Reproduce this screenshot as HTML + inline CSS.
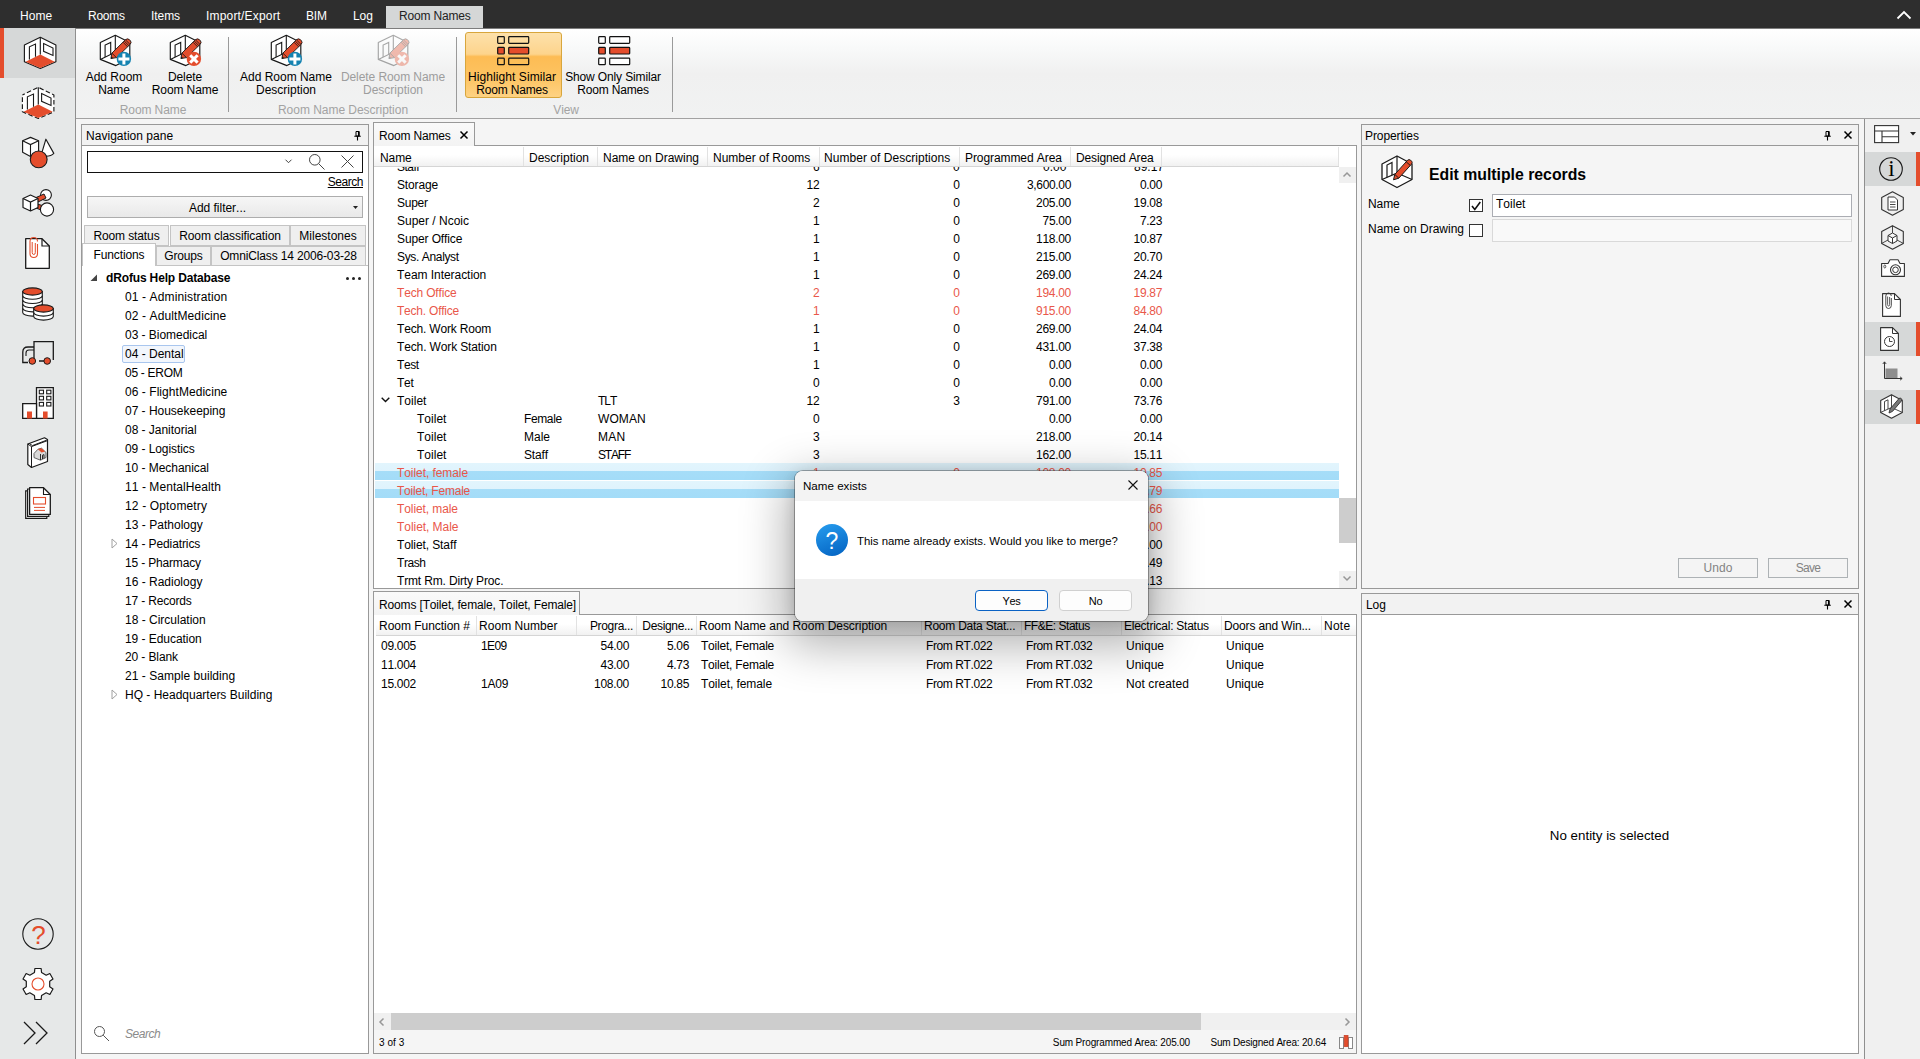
<!DOCTYPE html>
<html lang="en"><head><meta charset="utf-8"><title>dRofus - Room Names</title>
<style>
html,body{margin:0;padding:0}
body{width:1920px;height:1059px;overflow:hidden;position:relative;background:#f5f5f5;font-family:"Liberation Sans",sans-serif;font-size:12px;color:#000}
.a{position:absolute;box-sizing:border-box}
.t{position:absolute;white-space:nowrap;line-height:16px;height:16px;font-kerning:none}
.w{color:#fff}
.g{color:#9b9b9b}
.r{color:#e8503a}
svg{position:absolute;overflow:visible}
</style></head>
<body>
<div class="a" style="left:0px;top:0px;width:1920px;height:28px;background:#2e2e2e"></div>
<div class="a" style="left:386px;top:6px;width:97px;height:23px;background:#d5d7d7"></div>
<span class="t" style="left:20px;top:8.0px;letter-spacing:0.04px;color:#fff">Home</span>
<span class="t" style="left:88px;top:8.0px;letter-spacing:-0.27px;color:#fff">Rooms</span>
<span class="t" style="left:151px;top:8.0px;letter-spacing:-0.07px;color:#fff">Items</span>
<span class="t" style="left:206px;top:8.0px;letter-spacing:0.18px;color:#fff">Import/Export</span>
<span class="t" style="left:306px;top:8.0px;letter-spacing:-0.16px;color:#fff">BIM</span>
<span class="t" style="left:353px;top:8.0px;letter-spacing:-0.09px;color:#fff">Log</span>
<span class="t" style="left:399px;top:8.0px;letter-spacing:-0.17px;color:#222">Room Names</span>
<svg style="left:1896px;top:10px" width="16" height="10" viewBox="0 0 16 10"><path d="M1.5 8.5 L8 2 L14.5 8.5" fill="none" stroke="#fff" stroke-width="1.8"/></svg>
<div class="a" style="left:76px;top:28px;width:1844px;height:91px;background:linear-gradient(#ffffff 0%,#f8f9f9 22%,#f0f0f0 50%,#f1f2f2 100%);border-top:1px solid #7d7d7d;border-bottom:1px solid #a2a2a2"></div>
<div class="a" style="left:228px;top:37px;width:1px;height:75px;background:#9a9a9a"></div>
<div class="a" style="left:456px;top:37px;width:1px;height:75px;background:#9a9a9a"></div>
<div class="a" style="left:672px;top:37px;width:1px;height:75px;background:#9a9a9a"></div>
<div class="a" style="left:465px;top:32px;width:97px;height:66px;border:1px solid #d8a63c;border-radius:3px;background:linear-gradient(#fde1ab 0%,#fdd48c 33%,#fdbc54 37%,#fdc462 70%,#fed283 100%)"></div>
<span class="t" style="left:-36px;width:300px;text-align:center;top:69.0px;color:#000">Add Room</span>
<span class="t" style="left:-36px;width:300px;text-align:center;top:82.0px;letter-spacing:-0.08px;color:#000">Name</span>
<span class="t" style="left:35px;width:300px;text-align:center;top:69.0px;letter-spacing:-0.08px;color:#000">Delete</span>
<span class="t" style="left:35px;width:300px;text-align:center;top:82.0px;letter-spacing:-0.09px;color:#000">Room Name</span>
<span class="t" style="left:136px;width:300px;text-align:center;top:69.0px;letter-spacing:-0.02px;color:#000">Add Room Name</span>
<span class="t" style="left:136px;width:300px;text-align:center;top:82.0px;color:#000">Description</span>
<span class="t" style="left:243px;width:300px;text-align:center;top:69.0px;letter-spacing:-0.08px;color:#9d9d9d">Delete Room Name</span>
<span class="t" style="left:243px;width:300px;text-align:center;top:82.0px;color:#9d9d9d">Description</span>
<span class="t" style="left:362px;width:300px;text-align:center;top:69.0px;letter-spacing:0.08px;color:#000">Highlight Similar</span>
<span class="t" style="left:362px;width:300px;text-align:center;top:82.0px;letter-spacing:-0.17px;color:#000">Room Names</span>
<span class="t" style="left:463px;width:300px;text-align:center;top:69.0px;letter-spacing:-0.14px;color:#000">Show Only Similar</span>
<span class="t" style="left:463px;width:300px;text-align:center;top:82.0px;letter-spacing:-0.17px;color:#000">Room Names</span>
<span class="t" style="left:3px;width:300px;text-align:center;top:102.0px;letter-spacing:-0.09px;color:#a3a3a3">Room Name</span>
<span class="t" style="left:193px;width:300px;text-align:center;top:102.0px;letter-spacing:-0.03px;color:#a3a3a3">Room Name Description</span>
<span class="t" style="left:416px;width:300px;text-align:center;top:102.0px;letter-spacing:-0.18px;color:#a3a3a3">View</span>
<svg style="left:99px;top:35px;" width="36.0" height="34.0" viewBox="0 0 36 34"><path d="M1.3 7.6 L16.3 0.3 L30.8 7.6 L30.8 23.4 L16.9 30.6 L1.3 24.4 Z" fill="#fff" stroke="#161616" stroke-width="1.15" stroke-linejoin="round"/><path d="M16.3 0.3 L16.3 17.2 L1.3 24.4 M16.3 17.2 L30.8 23.4" fill="none" stroke="#161616" stroke-width="1.1"/><path d="M6.1 22 L6.1 10 L11.7 7.4 L11.7 19.3" fill="none" stroke="#161616" stroke-width="1.1"/><path d="M11.9 23.6 L12.9 18.1 L26.6 4.6 Q28.6 3 30.6 4.8 L31.2 5.4 Q33 7.4 31.2 9.3 L17.5 22.6 Z" fill="#e44d2c" stroke="#161616" stroke-width="0.9" stroke-linejoin="round"/><path d="M12.9 18.1 L17.5 22.6 M25.2 6 L29.8 10.6 M26.4 4.8 L31 9.4 M24 7.2 L28.6 11.8" fill="none" stroke="#161616" stroke-width="0.8"/><path d="M11.9 23.6 L12.3 21.4 L14.1 23.1 Z" fill="#161616"/><circle cx="24.9" cy="23.9" r="7.2" fill="#1583b1"/><path d="M24.9 18.4 V29.4 M19.4 23.9 H30.4" stroke="#fff" stroke-width="3"/></svg>
<svg style="left:169px;top:35px;" width="36.0" height="34.0" viewBox="0 0 36 34"><path d="M1.3 7.6 L16.3 0.3 L30.8 7.6 L30.8 23.4 L16.9 30.6 L1.3 24.4 Z" fill="#fff" stroke="#161616" stroke-width="1.15" stroke-linejoin="round"/><path d="M16.3 0.3 L16.3 17.2 L1.3 24.4 M16.3 17.2 L30.8 23.4" fill="none" stroke="#161616" stroke-width="1.1"/><path d="M6.1 22 L6.1 10 L11.7 7.4 L11.7 19.3" fill="none" stroke="#161616" stroke-width="1.1"/><path d="M11.9 23.6 L12.9 18.1 L26.6 4.6 Q28.6 3 30.6 4.8 L31.2 5.4 Q33 7.4 31.2 9.3 L17.5 22.6 Z" fill="#e44d2c" stroke="#161616" stroke-width="0.9" stroke-linejoin="round"/><path d="M12.9 18.1 L17.5 22.6 M25.2 6 L29.8 10.6 M26.4 4.8 L31 9.4 M24 7.2 L28.6 11.8" fill="none" stroke="#161616" stroke-width="0.8"/><path d="M11.9 23.6 L12.3 21.4 L14.1 23.1 Z" fill="#161616"/><circle cx="24.9" cy="23.9" r="7.2" fill="#e44d2c"/><path d="M21.2 20.2 L28.6 27.6 M28.6 20.2 L21.2 27.6" stroke="#fff" stroke-width="3"/></svg>
<svg style="left:270px;top:35px;" width="36.0" height="34.0" viewBox="0 0 36 34"><path d="M1.3 7.6 L16.3 0.3 L30.8 7.6 L30.8 23.4 L16.9 30.6 L1.3 24.4 Z" fill="#fff" stroke="#161616" stroke-width="1.15" stroke-linejoin="round"/><path d="M16.3 0.3 L16.3 17.2 L1.3 24.4 M16.3 17.2 L30.8 23.4" fill="none" stroke="#161616" stroke-width="1.1"/><path d="M6.1 22 L6.1 10 L11.7 7.4 L11.7 19.3" fill="none" stroke="#161616" stroke-width="1.1"/><path d="M11.9 23.6 L12.9 18.1 L26.6 4.6 Q28.6 3 30.6 4.8 L31.2 5.4 Q33 7.4 31.2 9.3 L17.5 22.6 Z" fill="#e44d2c" stroke="#161616" stroke-width="0.9" stroke-linejoin="round"/><path d="M12.9 18.1 L17.5 22.6 M25.2 6 L29.8 10.6 M26.4 4.8 L31 9.4 M24 7.2 L28.6 11.8" fill="none" stroke="#161616" stroke-width="0.8"/><path d="M11.9 23.6 L12.3 21.4 L14.1 23.1 Z" fill="#161616"/><circle cx="24.9" cy="23.9" r="7.2" fill="#1583b1"/><path d="M24.9 18.4 V29.4 M19.4 23.9 H30.4" stroke="#fff" stroke-width="3"/></svg>
<svg style="left:377px;top:35px;opacity:.36;" width="36.0" height="34.0" viewBox="0 0 36 34"><path d="M1.3 7.6 L16.3 0.3 L30.8 7.6 L30.8 23.4 L16.9 30.6 L1.3 24.4 Z" fill="#fff" stroke="#161616" stroke-width="1.15" stroke-linejoin="round"/><path d="M16.3 0.3 L16.3 17.2 L1.3 24.4 M16.3 17.2 L30.8 23.4" fill="none" stroke="#161616" stroke-width="1.1"/><path d="M6.1 22 L6.1 10 L11.7 7.4 L11.7 19.3" fill="none" stroke="#161616" stroke-width="1.1"/><path d="M11.9 23.6 L12.9 18.1 L26.6 4.6 Q28.6 3 30.6 4.8 L31.2 5.4 Q33 7.4 31.2 9.3 L17.5 22.6 Z" fill="#e44d2c" stroke="#161616" stroke-width="0.9" stroke-linejoin="round"/><path d="M12.9 18.1 L17.5 22.6 M25.2 6 L29.8 10.6 M26.4 4.8 L31 9.4 M24 7.2 L28.6 11.8" fill="none" stroke="#161616" stroke-width="0.8"/><path d="M11.9 23.6 L12.3 21.4 L14.1 23.1 Z" fill="#161616"/><circle cx="24.9" cy="23.9" r="7.2" fill="#e44d2c"/><path d="M21.2 20.2 L28.6 27.6 M28.6 20.2 L21.2 27.6" stroke="#fff" stroke-width="3"/></svg>
<svg style="left:497px;top:36px" width="34" height="30" viewBox="0 0 34 30"><rect x="0.7" y="0.7" width="6.6" height="6.6" rx="0.8" fill="none" stroke="#111" stroke-width="1.2"/><rect x="11.7" y="0.7" width="20" height="6.6" rx="0.8" fill="none" stroke="#111" stroke-width="1.2"/><rect x="0.7" y="11.4" width="6.6" height="6.6" rx="0.8" fill="#e44d2c" stroke="#111" stroke-width="1.2"/><rect x="11.7" y="11.4" width="20" height="6.6" rx="0.8" fill="#e44d2c" stroke="#111" stroke-width="1.2"/><rect x="0.7" y="22.1" width="6.6" height="6.6" rx="0.8" fill="none" stroke="#111" stroke-width="1.2"/><rect x="11.7" y="22.1" width="20" height="6.6" rx="0.8" fill="none" stroke="#111" stroke-width="1.2"/></svg>
<svg style="left:598px;top:36px" width="34" height="30" viewBox="0 0 34 30"><rect x="0.7" y="0.7" width="6.6" height="6.6" rx="0.8" fill="#fff" stroke="#111" stroke-width="1.2"/><rect x="11.7" y="0.7" width="20" height="6.6" rx="0.8" fill="#fff" stroke="#111" stroke-width="1.2"/><rect x="0.7" y="11.4" width="6.6" height="6.6" rx="0.8" fill="#e44d2c" stroke="#111" stroke-width="1.2"/><rect x="11.7" y="11.4" width="20" height="6.6" rx="0.8" fill="#e44d2c" stroke="#111" stroke-width="1.2"/><rect x="0.7" y="22.1" width="6.6" height="6.6" rx="0.8" fill="#fff" stroke="#111" stroke-width="1.2"/><rect x="11.7" y="22.1" width="20" height="6.6" rx="0.8" fill="#fff" stroke="#111" stroke-width="1.2"/></svg>
<div class="a" style="left:0px;top:28px;width:76px;height:1031px;background:#e6e8e8;border-right:1px solid #8f8f8f"></div>
<div class="a" style="left:0px;top:28px;width:75px;height:50px;background:#d6d8d8"></div>
<div class="a" style="left:0px;top:28px;width:4px;height:50px;background:#e44d2c"></div>
<svg style="left:24px;top:37px" width="33" height="32" viewBox="0 0 33 32"><path d="M0.4 8 L16.3 0.3 L31.9 8 L31.9 24.8 L16.3 31.5 L0.4 24.8 Z" fill="#fff" stroke="#1a1a1a" stroke-width="1.15" stroke-linejoin="round"/><path d="M1.6 24.8 L16.3 17.4 L30.7 24.8 L16.3 30.9 Z" fill="#e44d2c"/><path d="M16.3 0.3 L16.3 17.6" stroke="#1a1a1a" stroke-width="1.15"/><path d="M5.4 22.6 L5.4 9.8 L11.5 7 L11.5 19.8" fill="none" stroke="#1a1a1a" stroke-width="1.1"/><path d="M19.6 6.6 L29 11.1 L29 18.5 L19.6 14.3 Z" fill="none" stroke="#1a1a1a" stroke-width="1.1"/></svg>
<svg style="left:22px;top:87px" width="33" height="32" viewBox="0 0 33 32"><path d="M0.4 8 L16.3 0.3 L31.9 8 L31.9 24.8 L16.3 31.5 L0.4 24.8 Z" fill="#fff" stroke="#1a1a1a" stroke-width="1.15" stroke-linejoin="round" stroke-dasharray="4.6 2.4" stroke-dashoffset="2"/><path d="M1.6 24.8 L16.3 17.4 L30.7 24.8 L16.3 30.9 Z" fill="#e44d2c"/><path d="M16.3 0.3 L16.3 17.6" stroke="#1a1a1a" stroke-width="1.15"/><path d="M5.4 22.6 L5.4 9.8 L11.5 7 L11.5 19.8" fill="none" stroke="#1a1a1a" stroke-width="1.1"/><path d="M19.6 6.6 L29 11.1 L29 18.5 L19.6 14.3 Z" fill="none" stroke="#1a1a1a" stroke-width="1.1"/></svg>
<svg style="left:22px;top:137px" width="33" height="33" viewBox="0 0 33 33"><path d="M0.6 3.8 L8.5 0.4 L16.6 3.8 L16.6 15.2 L8.5 19.4 L0.6 15.2 Z" fill="#fff" stroke="#1a1a1a" stroke-width="1.15" stroke-linejoin="round"/><path d="M0.6 3.8 L8.5 7.6 L16.6 3.8 M8.5 7.6 L8.5 19.4" fill="none" stroke="#1a1a1a" stroke-width="1.1"/><path d="M23.9 2.2 L31.8 16.4 Q28 20.5 19 18.6 Z" fill="#fff" stroke="#1a1a1a" stroke-width="1.15" stroke-linejoin="round"/><circle cx="16.7" cy="22.4" r="8.4" fill="#e44d2c" stroke="#1a1a1a" stroke-width="1.1"/></svg>
<svg style="left:22px;top:189px" width="33" height="28" viewBox="0 0 33 28"><circle cx="24" cy="6" r="5.4" fill="#fff" stroke="#1a1a1a" stroke-width="1.1"/><path d="M13 9 L22 5 L24 9 L15 13.5 Z" fill="#e44d2c" stroke="#1a1a1a" stroke-width="1"/><path d="M12 14 L14 19 L24 23 L25 18 Z" fill="#e44d2c" stroke="#1a1a1a" stroke-width="1"/><circle cx="25" cy="20.5" r="6.6" fill="#fff" stroke="#1a1a1a" stroke-width="1.1"/><path d="M1 9.5 L8.5 6 L16 9.5 L16 18.5 L8.5 22 L1 18.5 Z" fill="#fff" stroke="#1a1a1a" stroke-width="1.2" stroke-linejoin="round"/><path d="M1 9.5 L8.5 13 L16 9.5 M8.5 13 L8.5 22" fill="none" stroke="#1a1a1a" stroke-width="1.2"/></svg>
<svg style="left:25px;top:238px" width="25" height="31" viewBox="0 0 25 31"><path d="M0.7 0.7 L17 0.7 L24.3 8 L24.3 30.3 L0.7 30.3 Z" fill="#fff" stroke="#1a1a1a" stroke-width="1.3" stroke-linejoin="round"/><path d="M17 0.7 L17 8 L24.3 8" fill="none" stroke="#1a1a1a" stroke-width="1.2"/><path d="M12.5 6 L12.5 15.5 Q12.5 19.5 8.8 19.5 Q5 19.5 5 15.5 L5 3.5 Q5 -0.5 8.8 -0.5 Q12.5 -0.5 12.5 3.5" fill="none" stroke="#e44d2c" stroke-width="1.1"/><path d="M7.2 4 L7.2 14.5 Q7.2 16.5 8.8 16.5 Q10.3 16.5 10.3 14.5 L10.3 5" fill="none" stroke="#e44d2c" stroke-width="1"/></svg>
<svg style="left:22px;top:287px" width="33" height="33" viewBox="0 0 33 33"><path d="M0.6999999999999993 4.5 L0.6999999999999993 25.5 A9.8 3.6 0 0 0 20.3 25.5 L20.3 4.5 Z" fill="#fff" stroke="#1a1a1a" stroke-width="1.1"/><path d="M0.6999999999999993 8.7 A9.8 3.6 0 0 0 20.3 8.7" fill="none" stroke="#1a1a1a" stroke-width="1.1"/><path d="M0.6999999999999993 12.9 A9.8 3.6 0 0 0 20.3 12.9" fill="none" stroke="#1a1a1a" stroke-width="1.1"/><path d="M0.6999999999999993 17.1 A9.8 3.6 0 0 0 20.3 17.1" fill="none" stroke="#1a1a1a" stroke-width="1.1"/><path d="M0.6999999999999993 21.3 A9.8 3.6 0 0 0 20.3 21.3" fill="none" stroke="#1a1a1a" stroke-width="1.1"/><ellipse cx="10.5" cy="4.5" rx="9.8" ry="3.6" fill="#e44d2c" stroke="#1a1a1a" stroke-width="1.1"/><path d="M11.7 21.5 L11.7 29.5 A9.8 3.6 0 0 0 31.3 29.5 L31.3 21.5 Z" fill="#fff" stroke="#1a1a1a" stroke-width="1.1"/><path d="M11.7 25.5 A9.8 3.6 0 0 0 31.3 25.5" fill="none" stroke="#1a1a1a" stroke-width="1.1"/><ellipse cx="21.5" cy="21.5" rx="9.8" ry="3.6" fill="#e44d2c" stroke="#1a1a1a" stroke-width="1.1"/></svg>
<svg style="left:22px;top:341px" width="33" height="24" viewBox="0 0 33 24"><path d="M12 19 L12 0.7 L31.3 0.7 L31.3 19" fill="none" stroke="#1a1a1a" stroke-width="1.3" stroke-linejoin="miter"/><path d="M12 6 L6 6 Q0.8 6 0.8 11 L0.8 21.5 L6 21.5 M17 20 L22 20" fill="none" stroke="#1a1a1a" stroke-width="1.3"/><path d="M12 9 L7 9 Q4 9 4 12 L4 15" fill="none" stroke="#1a1a1a" stroke-width="1.1"/><circle cx="10.3" cy="20" r="3.3" fill="#e44d2c" stroke="#1a1a1a" stroke-width="1"/><circle cx="25.2" cy="20" r="3.3" fill="#e44d2c" stroke="#1a1a1a" stroke-width="1"/></svg>
<svg style="left:22px;top:387px" width="33" height="33" viewBox="0 0 33 33"><path d="M14.5 31.3 L14.5 0.7 L31.3 0.7 L31.3 31.3 Z" fill="#fff" stroke="#1a1a1a" stroke-width="1.3"/><path d="M0.7 31.3 L0.7 16.7 L14.5 16.7 L14.5 31.3 Z" fill="#fff" stroke="#1a1a1a" stroke-width="1.3"/><rect x="17.3" y="3.2" width="4.2" height="3.6" fill="#fff" stroke="#1a1a1a" stroke-width="1.1"/><rect x="24.700000000000003" y="3.2" width="4.2" height="3.6" fill="#fff" stroke="#1a1a1a" stroke-width="1.1"/><rect x="17.3" y="9.3" width="4.2" height="3.6" fill="#fff" stroke="#1a1a1a" stroke-width="1.1"/><rect x="24.700000000000003" y="9.3" width="4.2" height="3.6" fill="#fff" stroke="#1a1a1a" stroke-width="1.1"/><rect x="17.3" y="15.399999999999999" width="4.2" height="3.6" fill="#fff" stroke="#1a1a1a" stroke-width="1.1"/><rect x="24.700000000000003" y="15.399999999999999" width="4.2" height="3.6" fill="#fff" stroke="#1a1a1a" stroke-width="1.1"/><rect x="5" y="24.5" width="5" height="7" fill="#e44d2c"/><rect x="21" y="24.5" width="4.6" height="7" fill="#e44d2c"/></svg>
<svg style="left:27px;top:437px" width="21" height="31" viewBox="0 0 21 31"><path d="M0.8 7 L17.5 0.8 L20.5 2.6 L20.5 24.5 L4.5 30.5 L0.8 27.5 Z" fill="#fff" stroke="#1a1a1a" stroke-width="1.2" stroke-linejoin="round"/><path d="M0.8 7 L4.5 9.6 L20.5 3.6 M4.5 9.6 L4.5 30.5 M2.2 6.4 L5.4 8.6 L19.6 3.2" fill="none" stroke="#1a1a1a" stroke-width="1"/><path d="M7 16.5 L11 12.2 L14.5 11.2 L19 15.5 L19 20.5 L13.5 23.2 L7 20.6 Z" fill="#d9d9d9" stroke="#555" stroke-width="0.9"/><path d="M11 12.2 L14.5 11.2 L18 14.6 L14.5 15.6 Z" fill="#e44d2c"/><path d="M13.5 23 L13.5 17 M15.5 22 L15.5 18.2 L17 17.6 L17 21.4" fill="none" stroke="#1a1a1a" stroke-width="0.9"/></svg>
<svg style="left:25px;top:487px" width="26" height="32" viewBox="0 0 26 32"><path d="M4 3.8 L0.7 3.8 L0.7 31.3 L21.8 31.3 L21.8 28" fill="#fff" stroke="#1a1a1a" stroke-width="1.2"/><path d="M5 2 L2.6 2 L2.6 29.4 L23.8 29.4 L23.8 27" fill="#fff" stroke="#1a1a1a" stroke-width="1.2"/><path d="M4.6 0.7 L18.5 0.7 L25.3 7.5 L25.3 27.4 L4.6 27.4 Z" fill="#fff" stroke="#1a1a1a" stroke-width="1.3" stroke-linejoin="round"/><path d="M18.5 0.7 L18.5 7.5 L25.3 7.5" fill="none" stroke="#1a1a1a" stroke-width="1.1"/><rect x="8.5" y="10.5" width="12" height="6.5" fill="none" stroke="#e44d2c" stroke-width="1.1"/><path d="M9 20.4 H20 M9 23.4 H20" stroke="#e44d2c" stroke-width="1"/></svg>
<svg style="left:22px;top:918px" width="32" height="32" viewBox="0 0 32 32"><circle cx="16" cy="16" r="15.2" fill="none" stroke="#1a1a1a" stroke-width="1.1"/></svg>
<span class="t" style="left:-111.5px;width:300px;text-align:center;top:921.0px;line-height:28px;height:28px;color:#e44d2c;font-size:26px">?</span>
<svg style="left:22px;top:968px" width="32" height="32" viewBox="0 0 32 32"><path d="M12.45 4.54 L12.86 0.51 L19.14 0.51 L19.55 4.54 L24.16 7.20 L27.84 5.54 L30.98 10.98 L27.70 13.34 L27.70 18.66 L30.98 21.02 L27.84 26.46 L24.16 24.80 L19.55 27.46 L19.14 31.49 L12.86 31.49 L12.45 27.46 L7.84 24.80 L4.16 26.46 L1.02 21.02 L4.30 18.66 L4.30 13.34 L1.02 10.98 L4.16 5.54 L7.84 7.20 Z" fill="#fff" stroke="#1a1a1a" stroke-width="1.2" stroke-linejoin="round"/><circle cx="16" cy="16" r="6" fill="none" stroke="#e44d2c" stroke-width="1.1"/></svg>
<svg style="left:23px;top:1021px" width="26" height="24" viewBox="0 0 26 24"><path d="M1 1 L12 12 L1 23 M13 1 L24 12 L13 23" fill="none" stroke="#1a1a1a" stroke-width="1.3"/></svg>
<div class="a" style="left:1864px;top:119px;width:56px;height:940px;background:#f0f0f0;border-left:1px solid #8f8f8f"></div>
<div class="a" style="left:1865px;top:152px;width:55px;height:34px;background:#d6d8d8"></div>
<div class="a" style="left:1916px;top:152px;width:4px;height:34px;background:#e44d2c"></div>
<div class="a" style="left:1865px;top:322px;width:55px;height:34px;background:#d6d8d8"></div>
<div class="a" style="left:1916px;top:322px;width:4px;height:34px;background:#e44d2c"></div>
<div class="a" style="left:1865px;top:390px;width:55px;height:34px;background:#d6d8d8"></div>
<div class="a" style="left:1916px;top:390px;width:4px;height:34px;background:#e44d2c"></div>
<svg style="left:1874px;top:125px" width="26" height="19" viewBox="0 0 26 19"><rect x="0.6" y="0.6" width="24" height="17" fill="#fff" stroke="#333" stroke-width="1.1"/><path d="M0.6 6 H24.6 M8 6 V17.6 M8 11.8 H24.6" fill="none" stroke="#333" stroke-width="1.1"/></svg>
<svg style="left:1910px;top:132px" width="6" height="4"><path d="M0 0 H6 L3 3.5 Z" fill="#222"/></svg>
<svg style="left:1879px;top:157px" width="24" height="24" viewBox="0 0 24 24"><circle cx="12" cy="12" r="11.3" fill="none" stroke="#1a1a1a" stroke-width="1.1"/></svg>
<span class="t" style="left:1741.5px;width:300px;text-align:center;top:157.0px;line-height:24px;height:24px;font-family:'Liberation Serif',serif;font-size:23px">i</span>
<svg style="left:1881px;top:191px" width="23" height="25" viewBox="0 0 23 25"><path d="M11.5 0.7 L22.3 6.6 L22.3 18.4 L11.5 24.3 L0.7 18.4 L0.7 6.6 Z" fill="none" stroke="#333" stroke-width="1.1" stroke-linejoin="round"/><path d="M7 6 L13.5 6 L16.5 9 L16.5 19 L7 19 Z" fill="#fff" stroke="#333" stroke-width="1"/><path d="M9 11 H14.5 M9 13.5 H14.5 M9 16 H14.5" stroke="#333" stroke-width="0.9"/></svg>
<svg style="left:1881px;top:225px" width="23" height="25" viewBox="0 0 23 25"><path d="M11.5 0.7 L22.3 6.6 L22.3 18.4 L11.5 24.3 L0.7 18.4 L0.7 6.6 Z" fill="none" stroke="#333" stroke-width="1.1" stroke-linejoin="round"/><path d="M11.5 0.7 V8 M0.7 18.4 L7 15 M22.3 18.4 L16 15" stroke="#333" stroke-width="0.9"/><path d="M7 10.5 L11.5 8 L16 10.5 L16 16 L11.5 18.5 L7 16 Z M7 10.5 L11.5 13 L16 10.5 M11.5 13 V18.5" fill="#fff" stroke="#333" stroke-width="1"/></svg>
<svg style="left:1881px;top:259px" width="24" height="18" viewBox="0 0 24 18"><path d="M0.6 4.5 L7 4.5 L9 0.8 L17 0.8 L19 4.5 L23.4 4.5 L23.4 17.4 L0.6 17.4 Z" fill="#fff" stroke="#333" stroke-width="1.1" stroke-linejoin="round"/><circle cx="14.5" cy="10.8" r="5" fill="none" stroke="#333" stroke-width="1.1"/><circle cx="14.5" cy="10.8" r="2.8" fill="none" stroke="#333" stroke-width="1"/><ellipse cx="3.8" cy="7.5" rx="1" ry="1.5" fill="none" stroke="#333" stroke-width="0.8"/></svg>
<svg style="left:1882px;top:293px" width="19" height="24" viewBox="0 0 19 24"><path d="M0.6 0.6 L12.5 0.6 L18.4 6.5 L18.4 23.4 L0.6 23.4 Z" fill="#fff" stroke="#333" stroke-width="1.1" stroke-linejoin="round"/><path d="M12.5 0.6 V6.5 H18.4" fill="none" stroke="#333" stroke-width="1"/><path d="M9.3 5 V12.5 Q9.3 15.5 6.5 15.5 Q3.8 15.5 3.8 12.5 V3 Q3.8 0 6.5 0 Q9.3 0 9.3 3" fill="none" stroke="#333" stroke-width="0.9"/><path d="M5.6 3.5 V11.5 Q5.6 13 6.6 13 Q7.6 13 7.6 11.5 V4" fill="none" stroke="#333" stroke-width="0.8"/></svg>
<svg style="left:1880px;top:327px" width="19" height="24" viewBox="0 0 19 24"><path d="M0.6 0.6 L12.5 0.6 L18.4 6.5 L18.4 23.4 L0.6 23.4 Z" fill="#fff" stroke="#333" stroke-width="1.1" stroke-linejoin="round"/><path d="M12.5 0.6 V6.5 H18.4" fill="none" stroke="#333" stroke-width="1"/><circle cx="9.5" cy="14.5" r="5" fill="none" stroke="#333" stroke-width="1"/><path d="M9.5 11 V14.5 H12.5" fill="none" stroke="#333" stroke-width="0.9"/></svg>
<svg style="left:1882px;top:361px" width="21" height="20" viewBox="0 0 21 20"><rect x="3.5" y="7.5" width="12" height="9.5" fill="#8e8e8e"/><path d="M2.5 1 V17.5 H20" fill="none" stroke="#333" stroke-width="1"/><path d="M0.8 3 L2.5 0.8 L4.2 3 M18 15.8 L20.2 17.5 L18 19.2" fill="none" stroke="#333" stroke-width="0.9"/></svg>
<svg style="left:1880px;top:394px" width="23" height="25" viewBox="0 0 23 25"><path d="M11.5 0.7 L22.3 6.6 L22.3 18.4 L11.5 24.3 L0.7 18.4 L0.7 6.6 Z" fill="#fff" stroke="#333" stroke-width="1.1" stroke-linejoin="round"/><path d="M11.5 0.7 V13.5 L0.7 18.4 M11.5 13.5 L22.3 18.4" fill="none" stroke="#333" stroke-width="0.9"/><path d="M4.5 16.5 V7.5 L8 5.8 V15" fill="none" stroke="#333" stroke-width="0.9"/><path d="M9 19 L10 15 L19 4.5 Q20.2 3.6 21.3 4.6 Q22.4 5.8 21.4 7 L12.5 17.4 Z" fill="#777" stroke="#333" stroke-width="0.9"/></svg>
<div class="a" style="left:81px;top:124px;width:288px;height:930px;background:#fff;border:1px solid #999"></div>
<div class="a" style="left:82px;top:125px;width:286px;height:20px;background:#f2f2f2"></div>
<div class="a" style="left:82px;top:145px;width:286px;height:1px;background:#999"></div>
<span class="t" style="left:86px;top:127.5px;letter-spacing:0.03px;">Navigation pane</span>
<svg style="left:354px;top:131px" width="7" height="10" viewBox="0 0 7 10"><path d="M2 0.5 H5.2 V5 H2 Z" fill="none" stroke="#000" stroke-width="1"/><path d="M4.6 0.5 V5" stroke="#000" stroke-width="1.3"/><path d="M0.3 5.3 H6.8 M3.5 5.3 V9.6" stroke="#000" stroke-width="1.1"/></svg>
<div class="a" style="left:87px;top:151px;width:276px;height:22px;background:#fff;border:1px solid #111"></div>
<svg style="left:285px;top:159px" width="7" height="5"><path d="M0.5 0.7 L3.5 3.7 L6.5 0.7" fill="none" stroke="#444" stroke-width="1"/></svg>
<svg style="left:308px;top:153px" width="18" height="18" viewBox="0 0 18 18"><circle cx="6.8" cy="6.8" r="5.3" fill="none" stroke="#444" stroke-width="1"/><path d="M10.6 10.6 L16.5 16.5" stroke="#444" stroke-width="1"/></svg>
<svg style="left:341px;top:155px" width="13" height="13" viewBox="0 0 13 13"><path d="M0.5 0.5 L12.5 12.5 M12.5 0.5 L0.5 12.5" stroke="#444" stroke-width="1"/></svg>
<span class="t" style="right:1557px;top:174.0px;letter-spacing:-0.46px;text-decoration:underline">Search</span>
<div class="a" style="left:87px;top:196px;width:276px;height:22px;background:linear-gradient(#f6f6f6,#e9e9e9);border:1px solid #adadad"></div>
<span class="t" style="left:67.5px;width:300px;text-align:center;top:199.5px;letter-spacing:-0.02px;">Add filter...</span>
<svg style="left:353px;top:206px" width="5" height="3"><path d="M0 0 H5 L2.5 3 Z" fill="#222"/></svg>
<div class="a" style="left:84px;top:225px;width:85px;height:21px;background:#efefef;border:1px solid #c4c4c4"></div>
<span class="t" style="left:-23.5px;width:300px;text-align:center;top:228.0px;letter-spacing:-0.12px;">Room status</span>
<div class="a" style="left:170px;top:225px;width:120px;height:21px;background:#efefef;border:1px solid #c4c4c4"></div>
<span class="t" style="left:80.0px;width:300px;text-align:center;top:228.0px;letter-spacing:-0.09px;">Room classification</span>
<div class="a" style="left:290px;top:225px;width:76px;height:21px;background:#efefef;border:1px solid #c4c4c4"></div>
<span class="t" style="left:178.0px;width:300px;text-align:center;top:228.0px;">Milestones</span>
<div class="a" style="left:156px;top:246px;width:55px;height:20px;background:#efefef;border:1px solid #c4c4c4"></div>
<span class="t" style="left:33.5px;width:300px;text-align:center;top:248.0px;letter-spacing:-0.17px;">Groups</span>
<div class="a" style="left:211px;top:246px;width:155px;height:20px;background:#efefef;border:1px solid #c4c4c4"></div>
<span class="t" style="left:138.5px;width:300px;text-align:center;top:248.0px;letter-spacing:-0.15px;">OmniClass 14 2006-03-28</span>
<div class="a" style="left:82px;top:265px;width:286px;height:1px;background:#c4c4c4"></div>
<div class="a" style="left:82px;top:243px;width:74px;height:23px;background:#fff;border:1px solid #c4c4c4;border-bottom:none"></div>
<span class="t" style="left:-31.0px;width:300px;text-align:center;top:246.5px;letter-spacing:-0.13px;">Functions</span>
<svg style="left:90px;top:274px" width="8" height="8"><path d="M7 0.5 V7 H0.5 Z" fill="#444"/></svg>
<span class="t" style="left:106px;top:269.5px;font-weight:bold;letter-spacing:-.15px">dRofus Help Database</span>
<div class="a" style="left:346px;top:277px;width:3px;height:3px;background:#222;border-radius:1.5px"></div>
<div class="a" style="left:352px;top:277px;width:3px;height:3px;background:#222;border-radius:1.5px"></div>
<div class="a" style="left:358px;top:277px;width:3px;height:3px;background:#222;border-radius:1.5px"></div>
<div class="a" style="left:122px;top:345px;width:63px;height:18px;background:#f2f6fc;border:1px solid #a9c6ee;border-radius:2px"></div>
<span class="t" style="left:125px;top:288.5px;letter-spacing:0.12px;">01 - Administration</span>
<span class="t" style="left:125px;top:307.5px;letter-spacing:0.11px;">02 - AdultMedicine</span>
<span class="t" style="left:125px;top:326.5px;letter-spacing:-0.03px;">03 - Biomedical</span>
<span class="t" style="left:125px;top:345.5px;">04 - Dental</span>
<span class="t" style="left:125px;top:364.5px;letter-spacing:-0.29px;">05 - EROM</span>
<span class="t" style="left:125px;top:383.5px;letter-spacing:0.05px;">06 - FlightMedicine</span>
<span class="t" style="left:125px;top:402.5px;letter-spacing:-0.02px;">07 - Housekeeping</span>
<span class="t" style="left:125px;top:421.5px;letter-spacing:-0.03px;">08 - Janitorial</span>
<span class="t" style="left:125px;top:440.5px;letter-spacing:-0.07px;">09 - Logistics</span>
<span class="t" style="left:125px;top:459.5px;letter-spacing:-0.05px;">10 - Mechanical</span>
<span class="t" style="left:125px;top:478.5px;letter-spacing:0.07px;">11 - MentalHealth</span>
<span class="t" style="left:125px;top:497.5px;letter-spacing:0.15px;">12 - Optometry</span>
<span class="t" style="left:125px;top:516.5px;letter-spacing:0.03px;">13 - Pathology</span>
<span class="t" style="left:125px;top:535.5px;letter-spacing:-0.10px;">14 - Pediatrics</span>
<span class="t" style="left:125px;top:554.5px;letter-spacing:-0.17px;">15 - Pharmacy</span>
<span class="t" style="left:125px;top:573.5px;">16 - Radiology</span>
<span class="t" style="left:125px;top:592.5px;letter-spacing:-0.17px;">17 - Records</span>
<span class="t" style="left:125px;top:611.5px;">18 - Circulation</span>
<span class="t" style="left:125px;top:630.5px;letter-spacing:-0.05px;">19 - Education</span>
<span class="t" style="left:125px;top:648.5px;letter-spacing:-0.11px;">20 - Blank</span>
<span class="t" style="left:125px;top:667.5px;letter-spacing:0.04px;">21 - Sample building</span>
<span class="t" style="left:125px;top:686.5px;">HQ - Headquarters Building</span>
<svg style="left:111px;top:538.0px" width="7" height="11"><path d="M1 1 L6 5.5 L1 10 Z" fill="#fff" stroke="#a0a0a0" stroke-width="1"/></svg>
<svg style="left:111px;top:689.0px" width="7" height="11"><path d="M1 1 L6 5.5 L1 10 Z" fill="#fff" stroke="#a0a0a0" stroke-width="1"/></svg>
<svg style="left:93px;top:1025px" width="17" height="17" viewBox="0 0 17 17"><circle cx="6.5" cy="6.5" r="5" fill="none" stroke="#555" stroke-width="1"/><path d="M10.2 10.2 L16 16" stroke="#555" stroke-width="1"/></svg>
<span class="t" style="left:125px;top:1025.5px;font-style:italic;letter-spacing:-0.46px;color:#8a8a8a">Search</span>
<div class="a" style="left:373px;top:145px;width:984px;height:444px;background:#fff;border:1px solid #999"></div>
<div class="a" style="left:373px;top:122px;width:102px;height:24px;background:linear-gradient(#fafafa,#f3f3f3);border:1px solid #999;border-bottom:none"></div>
<span class="t" style="left:379px;top:127.5px;letter-spacing:-0.17px;">Room Names</span>
<svg style="left:460px;top:131px" width="8" height="8" viewBox="0 0 8 8"><path d="M0.5 0.5 L7.5 7.5 M7.5 0.5 L0.5 7.5" stroke="#000" stroke-width="1.5"/></svg>
<div class="a" style="left:374px;top:146px;width:965px;height:21px;background:linear-gradient(#ffffff,#ffffff 45%,#f1f1f1);border-bottom:1px solid #d5d5d5"></div>
<div class="a" style="left:523px;top:147px;width:1px;height:19px;background:#e2e2e2"></div>
<div class="a" style="left:597px;top:147px;width:1px;height:19px;background:#e2e2e2"></div>
<div class="a" style="left:707px;top:147px;width:1px;height:19px;background:#e2e2e2"></div>
<div class="a" style="left:819px;top:147px;width:1px;height:19px;background:#e2e2e2"></div>
<div class="a" style="left:959px;top:147px;width:1px;height:19px;background:#e2e2e2"></div>
<div class="a" style="left:1070px;top:147px;width:1px;height:19px;background:#e2e2e2"></div>
<div class="a" style="left:1161px;top:147px;width:1px;height:19px;background:#e2e2e2"></div>
<div class="a" style="left:1338px;top:147px;width:1px;height:19px;background:#e2e2e2"></div>
<span class="t" style="left:380px;top:149.5px;letter-spacing:-0.08px;">Name</span>
<span class="t" style="left:529px;top:149.5px;">Description</span>
<span class="t" style="left:603px;top:149.5px;">Name on Drawing</span>
<span class="t" style="left:713px;top:149.5px;">Number of Rooms</span>
<span class="t" style="left:824px;top:149.5px;letter-spacing:0.04px;">Number of Descriptions</span>
<span class="t" style="left:965px;top:149.5px;letter-spacing:-0.08px;">Programmed Area</span>
<span class="t" style="left:1076px;top:149.5px;letter-spacing:-0.15px;">Designed Area</span>
<div class="a" style="left:1339px;top:167px;width:17px;height:16px;background:#f0f0f0"></div>
<div class="a" style="left:1339px;top:571px;width:17px;height:17px;background:#f0f0f0"></div>
<div class="a" style="left:1339px;top:498px;width:17px;height:45px;background:#cdcdcd"></div>
<svg style="left:1343px;top:172px" width="8" height="5"><path d="M0.5 4.5 L4 1 L7.5 4.5" fill="none" stroke="#979797" stroke-width="1.5"/></svg>
<svg style="left:1343px;top:576px" width="8" height="5"><path d="M0.5 0.5 L4 4 L7.5 0.5" fill="none" stroke="#979797" stroke-width="1.5"/></svg>
<div class="a" style="left:375px;top:167px;width:964px;height:6px;overflow:hidden">
<span class="t" style="left:22px;top:-8.5px;letter-spacing:-.5px">Staff</span><span class="t" style="left:438px;top:-8.5px">6</span><span class="t" style="left:578px;top:-8.5px">0</span><span class="t" style="left:668px;top:-8.5px">0.00</span><span class="t" style="left:759px;top:-8.5px">89.17</span>
</div>
<div class="a" style="left:375px;top:463px;width:964px;height:17px;background:linear-gradient(#e2f5fd 0%,#dff3fd 49%,#a6ddf8 50%,#a3dcf8 100%)"></div>
<div class="a" style="left:375px;top:481px;width:964px;height:17px;background:linear-gradient(#e2f5fd 0%,#dff3fd 49%,#a6ddf8 50%,#a3dcf8 100%)"></div>
<span class="t" style="left:397px;top:176.5px;letter-spacing:-0.13px;">Storage</span>
<span class="t" style="right:1100.6px;top:176.5px;letter-spacing:-0.21px;">12</span>
<span class="t" style="right:960.3px;top:176.5px;letter-spacing:-0.21px;">0</span>
<span class="t" style="right:849px;top:176.5px;letter-spacing:-0.34px;">3,600.00</span>
<span class="t" style="right:758px;top:176.5px;letter-spacing:-0.34px;">0.00</span>
<span class="t" style="left:397px;top:194.5px;letter-spacing:-0.27px;">Super</span>
<span class="t" style="right:1100.6px;top:194.5px;letter-spacing:-0.21px;">2</span>
<span class="t" style="right:960.3px;top:194.5px;letter-spacing:-0.21px;">0</span>
<span class="t" style="right:849px;top:194.5px;letter-spacing:-0.29px;">205.00</span>
<span class="t" style="right:758px;top:194.5px;letter-spacing:-0.31px;">19.08</span>
<span class="t" style="left:397px;top:212.5px;">Super / Ncoic</span>
<span class="t" style="right:1100.6px;top:212.5px;letter-spacing:-0.21px;">1</span>
<span class="t" style="right:960.3px;top:212.5px;letter-spacing:-0.21px;">0</span>
<span class="t" style="right:849px;top:212.5px;letter-spacing:-0.31px;">75.00</span>
<span class="t" style="right:758px;top:212.5px;letter-spacing:-0.34px;">7.23</span>
<span class="t" style="left:397px;top:230.5px;letter-spacing:-0.12px;">Super Office</span>
<span class="t" style="right:1100.6px;top:230.5px;letter-spacing:-0.21px;">1</span>
<span class="t" style="right:960.3px;top:230.5px;letter-spacing:-0.21px;">0</span>
<span class="t" style="right:849px;top:230.5px;letter-spacing:-0.29px;">118.00</span>
<span class="t" style="right:758px;top:230.5px;letter-spacing:-0.31px;">10.87</span>
<span class="t" style="left:397px;top:248.5px;letter-spacing:-0.36px;">Sys. Analyst</span>
<span class="t" style="right:1100.6px;top:248.5px;letter-spacing:-0.21px;">1</span>
<span class="t" style="right:960.3px;top:248.5px;letter-spacing:-0.21px;">0</span>
<span class="t" style="right:849px;top:248.5px;letter-spacing:-0.29px;">215.00</span>
<span class="t" style="right:758px;top:248.5px;letter-spacing:-0.31px;">20.70</span>
<span class="t" style="left:397px;top:266.5px;letter-spacing:-0.05px;">Team Interaction</span>
<span class="t" style="right:1100.6px;top:266.5px;letter-spacing:-0.21px;">1</span>
<span class="t" style="right:960.3px;top:266.5px;letter-spacing:-0.21px;">0</span>
<span class="t" style="right:849px;top:266.5px;letter-spacing:-0.29px;">269.00</span>
<span class="t" style="right:758px;top:266.5px;letter-spacing:-0.31px;">24.24</span>
<span class="t" style="left:397px;top:284.5px;letter-spacing:-0.17px;color:#e9574a;">Tech Office</span>
<span class="t" style="right:1100.6px;top:284.5px;letter-spacing:-0.21px;color:#e9574a;">2</span>
<span class="t" style="right:960.3px;top:284.5px;letter-spacing:-0.21px;color:#e9574a;">0</span>
<span class="t" style="right:849px;top:284.5px;letter-spacing:-0.29px;color:#e9574a;">194.00</span>
<span class="t" style="right:758px;top:284.5px;letter-spacing:-0.31px;color:#e9574a;">19.87</span>
<span class="t" style="left:397px;top:302.5px;letter-spacing:-0.22px;color:#e9574a;">Tech. Office</span>
<span class="t" style="right:1100.6px;top:302.5px;letter-spacing:-0.21px;color:#e9574a;">1</span>
<span class="t" style="right:960.3px;top:302.5px;letter-spacing:-0.21px;color:#e9574a;">0</span>
<span class="t" style="right:849px;top:302.5px;letter-spacing:-0.29px;color:#e9574a;">915.00</span>
<span class="t" style="right:758px;top:302.5px;letter-spacing:-0.31px;color:#e9574a;">84.80</span>
<span class="t" style="left:397px;top:320.5px;letter-spacing:-0.18px;">Tech. Work Room</span>
<span class="t" style="right:1100.6px;top:320.5px;letter-spacing:-0.21px;">1</span>
<span class="t" style="right:960.3px;top:320.5px;letter-spacing:-0.21px;">0</span>
<span class="t" style="right:849px;top:320.5px;letter-spacing:-0.29px;">269.00</span>
<span class="t" style="right:758px;top:320.5px;letter-spacing:-0.31px;">24.04</span>
<span class="t" style="left:397px;top:338.5px;letter-spacing:-0.13px;">Tech. Work Station</span>
<span class="t" style="right:1100.6px;top:338.5px;letter-spacing:-0.21px;">1</span>
<span class="t" style="right:960.3px;top:338.5px;letter-spacing:-0.21px;">0</span>
<span class="t" style="right:849px;top:338.5px;letter-spacing:-0.29px;">431.00</span>
<span class="t" style="right:758px;top:338.5px;letter-spacing:-0.31px;">37.38</span>
<span class="t" style="left:397px;top:356.5px;letter-spacing:-0.40px;">Test</span>
<span class="t" style="right:1100.6px;top:356.5px;letter-spacing:-0.21px;">1</span>
<span class="t" style="right:960.3px;top:356.5px;letter-spacing:-0.21px;">0</span>
<span class="t" style="right:849px;top:356.5px;letter-spacing:-0.34px;">0.00</span>
<span class="t" style="right:758px;top:356.5px;letter-spacing:-0.34px;">0.00</span>
<span class="t" style="left:397px;top:374.5px;letter-spacing:-0.24px;">Tet</span>
<span class="t" style="right:1100.6px;top:374.5px;letter-spacing:-0.21px;">0</span>
<span class="t" style="right:960.3px;top:374.5px;letter-spacing:-0.21px;">0</span>
<span class="t" style="right:849px;top:374.5px;letter-spacing:-0.34px;">0.00</span>
<span class="t" style="right:758px;top:374.5px;letter-spacing:-0.34px;">0.00</span>
<span class="t" style="left:397px;top:392.5px;letter-spacing:0.02px;">Toilet</span>
<span class="t" style="left:598px;top:392.5px;letter-spacing:-1.04px;">TLT</span>
<span class="t" style="right:1100.6px;top:392.5px;letter-spacing:-0.21px;">12</span>
<span class="t" style="right:960.3px;top:392.5px;letter-spacing:-0.21px;">3</span>
<span class="t" style="right:849px;top:392.5px;letter-spacing:-0.29px;">791.00</span>
<span class="t" style="right:758px;top:392.5px;letter-spacing:-0.31px;">73.76</span>
<span class="t" style="left:417px;top:410.5px;letter-spacing:0.02px;">Toilet</span>
<span class="t" style="left:524px;top:410.5px;letter-spacing:-0.38px;">Female</span>
<span class="t" style="left:598px;top:410.5px;letter-spacing:0.09px;">WOMAN</span>
<span class="t" style="right:1100.6px;top:410.5px;letter-spacing:-0.21px;">0</span>
<span class="t" style="right:849px;top:410.5px;letter-spacing:-0.34px;">0.00</span>
<span class="t" style="right:758px;top:410.5px;letter-spacing:-0.34px;">0.00</span>
<span class="t" style="left:417px;top:428.5px;letter-spacing:0.02px;">Toilet</span>
<span class="t" style="left:524px;top:428.5px;">Male</span>
<span class="t" style="left:598px;top:428.5px;letter-spacing:0.28px;">MAN</span>
<span class="t" style="right:1100.6px;top:428.5px;letter-spacing:-0.21px;">3</span>
<span class="t" style="right:849px;top:428.5px;letter-spacing:-0.29px;">218.00</span>
<span class="t" style="right:758px;top:428.5px;letter-spacing:-0.31px;">20.14</span>
<span class="t" style="left:417px;top:446.5px;letter-spacing:0.02px;">Toilet</span>
<span class="t" style="left:524px;top:446.5px;letter-spacing:-0.13px;">Staff</span>
<span class="t" style="left:598px;top:446.5px;letter-spacing:-1.18px;">STAFF</span>
<span class="t" style="right:1100.6px;top:446.5px;letter-spacing:-0.21px;">3</span>
<span class="t" style="right:849px;top:446.5px;letter-spacing:-0.29px;">162.00</span>
<span class="t" style="right:758px;top:446.5px;letter-spacing:-0.31px;">15.11</span>
<span class="t" style="left:397px;top:464.5px;letter-spacing:-0.07px;color:#e9574a;">Toilet, female</span>
<span class="t" style="right:1100.6px;top:464.5px;letter-spacing:-0.21px;color:#e9574a;">1</span>
<span class="t" style="right:960.3px;top:464.5px;letter-spacing:-0.21px;color:#e9574a;">0</span>
<span class="t" style="right:849px;top:464.5px;letter-spacing:-0.29px;color:#e9574a;">108.00</span>
<span class="t" style="right:758px;top:464.5px;letter-spacing:-0.31px;color:#e9574a;">10.85</span>
<span class="t" style="left:397px;top:482.5px;letter-spacing:-0.21px;color:#e9574a;">Toilet, Female</span>
<span class="t" style="right:1100.6px;top:482.5px;letter-spacing:-0.21px;color:#e9574a;">2</span>
<span class="t" style="right:960.3px;top:482.5px;letter-spacing:-0.21px;color:#e9574a;">0</span>
<span class="t" style="right:849px;top:482.5px;letter-spacing:-0.31px;color:#e9574a;">97.00</span>
<span class="t" style="right:758px;top:482.5px;letter-spacing:-0.34px;color:#e9574a;">9.79</span>
<span class="t" style="left:397px;top:500.5px;letter-spacing:-0.09px;color:#e9574a;">Toliet, male</span>
<span class="t" style="right:1100.6px;top:500.5px;letter-spacing:-0.21px;color:#e9574a;">1</span>
<span class="t" style="right:960.3px;top:500.5px;letter-spacing:-0.21px;color:#e9574a;">0</span>
<span class="t" style="right:849px;top:500.5px;letter-spacing:-0.31px;color:#e9574a;">54.00</span>
<span class="t" style="right:758px;top:500.5px;letter-spacing:-0.34px;color:#e9574a;">5.66</span>
<span class="t" style="left:397px;top:518.5px;letter-spacing:-0.05px;color:#e9574a;">Toliet, Male</span>
<span class="t" style="right:1100.6px;top:518.5px;letter-spacing:-0.21px;color:#e9574a;">1</span>
<span class="t" style="right:960.3px;top:518.5px;letter-spacing:-0.21px;color:#e9574a;">0</span>
<span class="t" style="right:849px;top:518.5px;letter-spacing:-0.34px;color:#e9574a;">0.00</span>
<span class="t" style="right:758px;top:518.5px;letter-spacing:-0.34px;color:#e9574a;">0.00</span>
<span class="t" style="left:397px;top:536.5px;letter-spacing:-0.10px;">Toliet, Staff</span>
<span class="t" style="right:1100.6px;top:536.5px;letter-spacing:-0.21px;">1</span>
<span class="t" style="right:960.3px;top:536.5px;letter-spacing:-0.21px;">0</span>
<span class="t" style="right:849px;top:536.5px;letter-spacing:-0.34px;">0.00</span>
<span class="t" style="right:758px;top:536.5px;letter-spacing:-0.34px;">0.00</span>
<span class="t" style="left:397px;top:554.5px;letter-spacing:-0.45px;">Trash</span>
<span class="t" style="right:1100.6px;top:554.5px;letter-spacing:-0.21px;">1</span>
<span class="t" style="right:960.3px;top:554.5px;letter-spacing:-0.21px;">0</span>
<span class="t" style="right:849px;top:554.5px;letter-spacing:-0.31px;">27.00</span>
<span class="t" style="right:758px;top:554.5px;letter-spacing:-0.34px;">2.49</span>
<span class="t" style="left:397px;top:572.5px;letter-spacing:-0.15px;">Trmt Rm. Dirty Proc.</span>
<span class="t" style="right:1100.6px;top:572.5px;letter-spacing:-0.21px;">1</span>
<span class="t" style="right:960.3px;top:572.5px;letter-spacing:-0.21px;">0</span>
<span class="t" style="right:849px;top:572.5px;letter-spacing:-0.29px;">118.00</span>
<span class="t" style="right:758px;top:572.5px;letter-spacing:-0.31px;">11.13</span>
<svg style="left:381px;top:397px" width="9" height="6"><path d="M0.7 0.7 L4.5 4.5 L8.3 0.7" fill="none" stroke="#111" stroke-width="1.4"/></svg>
<div class="a" style="left:373px;top:614px;width:984px;height:440px;background:#fff;border:1px solid #999"></div>
<div class="a" style="left:373px;top:591px;width:207px;height:24px;background:linear-gradient(#fafafa,#f3f3f3);border:1px solid #999;border-bottom:none"></div>
<span class="t" style="left:379px;top:596.5px;letter-spacing:-0.15px;">Rooms [Toilet, female, Toilet, Female]</span>
<div class="a" style="left:376px;top:615px;width:980px;height:21px;background:linear-gradient(#ffffff,#ffffff 45%,#f1f1f1);border-bottom:1px solid #d5d5d5"></div>
<div class="a" style="left:476px;top:616px;width:1px;height:19px;background:#e2e2e2"></div>
<div class="a" style="left:576px;top:616px;width:1px;height:19px;background:#e2e2e2"></div>
<div class="a" style="left:636px;top:616px;width:1px;height:19px;background:#e2e2e2"></div>
<div class="a" style="left:696px;top:616px;width:1px;height:19px;background:#e2e2e2"></div>
<div class="a" style="left:921px;top:616px;width:1px;height:19px;background:#e2e2e2"></div>
<div class="a" style="left:1021px;top:616px;width:1px;height:19px;background:#e2e2e2"></div>
<div class="a" style="left:1121px;top:616px;width:1px;height:19px;background:#e2e2e2"></div>
<div class="a" style="left:1221px;top:616px;width:1px;height:19px;background:#e2e2e2"></div>
<div class="a" style="left:1321px;top:616px;width:1px;height:19px;background:#e2e2e2"></div>
<span class="t" style="left:379px;top:617.5px;letter-spacing:-0.03px;">Room Function #</span>
<span class="t" style="left:479px;top:617.5px;letter-spacing:0.04px;">Room Number</span>
<span class="t" style="left:699px;top:617.5px;letter-spacing:-0.04px;">Room Name and Room Description</span>
<span class="t" style="left:924px;top:617.5px;letter-spacing:-0.24px;">Room Data Stat...</span>
<span class="t" style="left:1024px;top:617.5px;letter-spacing:-0.47px;">FF&amp;E: Status</span>
<span class="t" style="left:1124px;top:617.5px;letter-spacing:-0.25px;">Electrical: Status</span>
<span class="t" style="left:1224px;top:617.5px;letter-spacing:-0.15px;">Doors and Win...</span>
<span class="t" style="left:1324px;top:617.5px;letter-spacing:0.25px;">Note</span>
<span class="t" style="right:1287px;top:617.5px;letter-spacing:-0.33px;">Progra...</span>
<span class="t" style="right:1227px;top:617.5px;letter-spacing:-0.34px;">Designe...</span>
<span class="t" style="left:381px;top:637.5px;letter-spacing:-0.29px;">09.005</span>
<span class="t" style="left:481px;top:637.5px;letter-spacing:-0.64px;">1E09</span>
<span class="t" style="right:1291px;top:637.5px;letter-spacing:-0.31px;">54.00</span>
<span class="t" style="right:1231px;top:637.5px;letter-spacing:-0.34px;">5.06</span>
<span class="t" style="left:701px;top:637.5px;letter-spacing:-0.21px;">Toilet, Female</span>
<span class="t" style="left:926px;top:637.5px;letter-spacing:-0.41px;">From RT.022</span>
<span class="t" style="left:1026px;top:637.5px;letter-spacing:-0.41px;">From RT.032</span>
<span class="t" style="left:1126px;top:637.5px;">Unique</span>
<span class="t" style="left:1226px;top:637.5px;">Unique</span>
<span class="t" style="left:381px;top:656.5px;letter-spacing:-0.29px;">11.004</span>
<span class="t" style="left:481px;top:656.5px;"></span>
<span class="t" style="right:1291px;top:656.5px;letter-spacing:-0.31px;">43.00</span>
<span class="t" style="right:1231px;top:656.5px;letter-spacing:-0.34px;">4.73</span>
<span class="t" style="left:701px;top:656.5px;letter-spacing:-0.21px;">Toilet, Female</span>
<span class="t" style="left:926px;top:656.5px;letter-spacing:-0.41px;">From RT.022</span>
<span class="t" style="left:1026px;top:656.5px;letter-spacing:-0.41px;">From RT.032</span>
<span class="t" style="left:1126px;top:656.5px;">Unique</span>
<span class="t" style="left:1226px;top:656.5px;">Unique</span>
<span class="t" style="left:381px;top:675.5px;letter-spacing:-0.29px;">15.002</span>
<span class="t" style="left:481px;top:675.5px;letter-spacing:-0.22px;">1A09</span>
<span class="t" style="right:1291px;top:675.5px;letter-spacing:-0.29px;">108.00</span>
<span class="t" style="right:1231px;top:675.5px;letter-spacing:-0.31px;">10.85</span>
<span class="t" style="left:701px;top:675.5px;letter-spacing:-0.07px;">Toilet, female</span>
<span class="t" style="left:926px;top:675.5px;letter-spacing:-0.41px;">From RT.022</span>
<span class="t" style="left:1026px;top:675.5px;letter-spacing:-0.41px;">From RT.032</span>
<span class="t" style="left:1126px;top:675.5px;letter-spacing:0.08px;">Not created</span>
<span class="t" style="left:1226px;top:675.5px;">Unique</span>
<div class="a" style="left:374px;top:1013px;width:982px;height:17px;background:#f0f0f0"></div>
<div class="a" style="left:391px;top:1013px;width:810px;height:17px;background:#cdcdcd"></div>
<svg style="left:379px;top:1018px" width="5" height="8"><path d="M4.5 0.5 L1 4 L4.5 7.5" fill="none" stroke="#979797" stroke-width="1.5"/></svg>
<svg style="left:1345px;top:1018px" width="5" height="8"><path d="M0.5 0.5 L4 4 L0.5 7.5" fill="none" stroke="#979797" stroke-width="1.5"/></svg>
<div class="a" style="left:374px;top:1030px;width:982px;height:23px;background:#f5f5f5"></div>
<span class="t" style="left:379px;top:1035.0px;font-size:10px;letter-spacing:0.04px;">3 of 3</span>
<span class="t" style="right:730px;top:1035.0px;font-size:10px;letter-spacing:-0.15px;">Sum Programmed Area: 205.00</span>
<span class="t" style="right:594px;top:1035.0px;font-size:10px;letter-spacing:-0.19px;">Sum Designed Area: 20.64</span>
<svg style="left:1339px;top:1035px" width="15" height="14"><rect x="0.5" y="2.5" width="4" height="11" fill="#fff" stroke="#888" stroke-width="1"/><rect x="9.5" y="2.5" width="4" height="11" fill="#fff" stroke="#888" stroke-width="1"/><rect x="5.2" y="0.5" width="3.8" height="11" fill="#e44d2c" stroke="#c8432a" stroke-width="0.8"/></svg>
<div class="a" style="left:1361px;top:124px;width:498px;height:465px;background:#f5f5f5;border:1px solid #999"></div>
<div class="a" style="left:1362px;top:125px;width:496px;height:20px;background:#f2f2f2"></div>
<div class="a" style="left:1362px;top:145px;width:496px;height:1px;background:#999"></div>
<span class="t" style="left:1365px;top:127.5px;letter-spacing:-0.09px;">Properties</span>
<svg style="left:1824px;top:131px" width="7" height="10" viewBox="0 0 7 10"><path d="M2 0.5 H5.2 V5 H2 Z" fill="none" stroke="#000" stroke-width="1"/><path d="M4.6 0.5 V5" stroke="#000" stroke-width="1.3"/><path d="M0.3 5.3 H6.8 M3.5 5.3 V9.6" stroke="#000" stroke-width="1.1"/></svg>
<svg style="left:1844px;top:131px" width="8" height="8" viewBox="0 0 8 8"><path d="M0.5 0.5 L7.5 7.5 M7.5 0.5 L0.5 7.5" stroke="#000" stroke-width="1.5"/></svg>
<svg style="left:1381px;top:155px" width="34" height="34" viewBox="0 0 34 34"><path d="M1 9 L16 1 L31 9 L31 24.5 L16 32.5 L1 24.5 Z" fill="#fff" stroke="#1a1a1a" stroke-width="1.3" stroke-linejoin="round"/><path d="M16 1 V18 L1 24.5 M16 18 L31 24.5" fill="none" stroke="#1a1a1a" stroke-width="1.2"/><path d="M6 22.2 V10 L11 7.5 V20" fill="none" stroke="#1a1a1a" stroke-width="1.2"/><path d="M12.5 24.8 L13.8 19.4 L26.6 5.2 Q28 4 29.6 5.2 L30.6 6.2 Q31.8 7.6 30.6 9 L17.8 23.2 Z" fill="#e44d2c" stroke="#1a1a1a" stroke-width="1"/><path d="M25.2 6.8 L29.2 10.4 M13.8 19.4 L17.8 23.2" fill="none" stroke="#1a1a1a" stroke-width="1"/></svg>
<span class="t" style="left:1429px;top:165.0px;line-height:20px;height:20px;font-size:15.8px;font-weight:bold">Edit multiple records</span>
<span class="t" style="left:1368px;top:195.5px;letter-spacing:-0.08px;">Name</span>
<span class="t" style="left:1368px;top:221.0px;">Name on Drawing</span>
<div class="a" style="left:1469px;top:199px;width:14px;height:13px;background:#fff;border:1px solid #333"></div>
<svg style="left:1471px;top:200.5px" width="10" height="10"><path d="M1 5 L3.8 8.5 L9.3 1" fill="none" stroke="#111" stroke-width="1.6"/></svg>
<div class="a" style="left:1469px;top:224px;width:14px;height:13px;background:#fff;border:1px solid #333"></div>
<div class="a" style="left:1492px;top:194px;width:360px;height:23px;background:#fff;border:1px solid #abadb3"></div>
<span class="t" style="left:1496px;top:195.5px;letter-spacing:0.02px;">Toilet</span>
<div class="a" style="left:1492px;top:219px;width:360px;height:23px;background:#f9f9f9;border:1px solid #d9d9d9"></div>
<div class="a" style="left:1678px;top:558px;width:80px;height:20px;background:#f4f4f4;border:1px solid #adb2b5"></div>
<div class="a" style="left:1768px;top:558px;width:80px;height:20px;background:#f4f4f4;border:1px solid #adb2b5"></div>
<span class="t" style="left:1568px;width:300px;text-align:center;top:560.0px;letter-spacing:0.11px;color:#838383">Undo</span>
<span class="t" style="left:1658px;width:300px;text-align:center;top:560.0px;letter-spacing:-0.71px;color:#838383">Save</span>
<div class="a" style="left:1361px;top:593px;width:498px;height:461px;background:#fff;border:1px solid #999"></div>
<div class="a" style="left:1362px;top:594px;width:496px;height:21px;background:#f2f2f2"></div>
<div class="a" style="left:1362px;top:614px;width:496px;height:1px;background:#999"></div>
<span class="t" style="left:1366px;top:596.5px;letter-spacing:-0.09px;">Log</span>
<svg style="left:1824px;top:600px" width="7" height="10" viewBox="0 0 7 10"><path d="M2 0.5 H5.2 V5 H2 Z" fill="none" stroke="#000" stroke-width="1"/><path d="M4.6 0.5 V5" stroke="#000" stroke-width="1.3"/><path d="M0.3 5.3 H6.8 M3.5 5.3 V9.6" stroke="#000" stroke-width="1.1"/></svg>
<svg style="left:1844px;top:600px" width="8" height="8" viewBox="0 0 8 8"><path d="M0.5 0.5 L7.5 7.5 M7.5 0.5 L0.5 7.5" stroke="#000" stroke-width="1.5"/></svg>
<span class="t" style="left:1459.5px;width:300px;text-align:center;top:827.5px;font-size:13.33px;">No entity is selected</span>
<div class="a" style="left:795px;top:471px;width:353px;height:150px;background:#fff;border-radius:8px;box-shadow:0 0 0 1px rgba(0,0,0,.30),0 16px 46px 9px rgba(0,0,0,.30),0 4px 14px rgba(0,0,0,.16);overflow:hidden"><div class="a" style="left:0;top:0;width:353px;height:30px;background:#f3f3f3"></div><div class="a" style="left:0;top:108px;width:353px;height:42px;background:#f0f0f0"></div></div>
<span class="t" style="left:803px;top:477.5px;font-size:11.6px">Name exists</span>
<svg style="left:1128px;top:480px" width="10" height="10" viewBox="0 0 10 10"><path d="M0.5 0.5 L9.5 9.5 M9.5 0.5 L0.5 9.5" stroke="#111" stroke-width="1.1"/></svg>
<div class="a" style="left:816px;top:524px;width:32px;height:32px;border-radius:16px;background:linear-gradient(160deg,#2397ea 10%,#0667c5 90%)"></div>
<span class="t" style="left:682px;width:300px;text-align:center;top:528.5px;line-height:24px;height:24px;color:#fff;font-size:23px">?</span>
<span class="t" style="left:857px;top:533.0px;font-size:11.4px">This name already exists. Would you like to merge?</span>
<div class="a" style="left:975px;top:590px;width:73px;height:21px;background:#fdfdfd;border:1.5px solid #0a62c4;border-radius:4px"></div>
<div class="a" style="left:1059px;top:590px;width:73px;height:21px;background:#fdfdfd;border:1px solid #d0d0d0;border-radius:4px"></div>
<span class="t" style="left:861.5px;width:300px;text-align:center;top:592.5px;font-size:11px;letter-spacing:-.4px">Yes</span>
<span class="t" style="left:945.5px;width:300px;text-align:center;top:592.5px;font-size:11px;letter-spacing:-.3px">No</span>
</body></html>
